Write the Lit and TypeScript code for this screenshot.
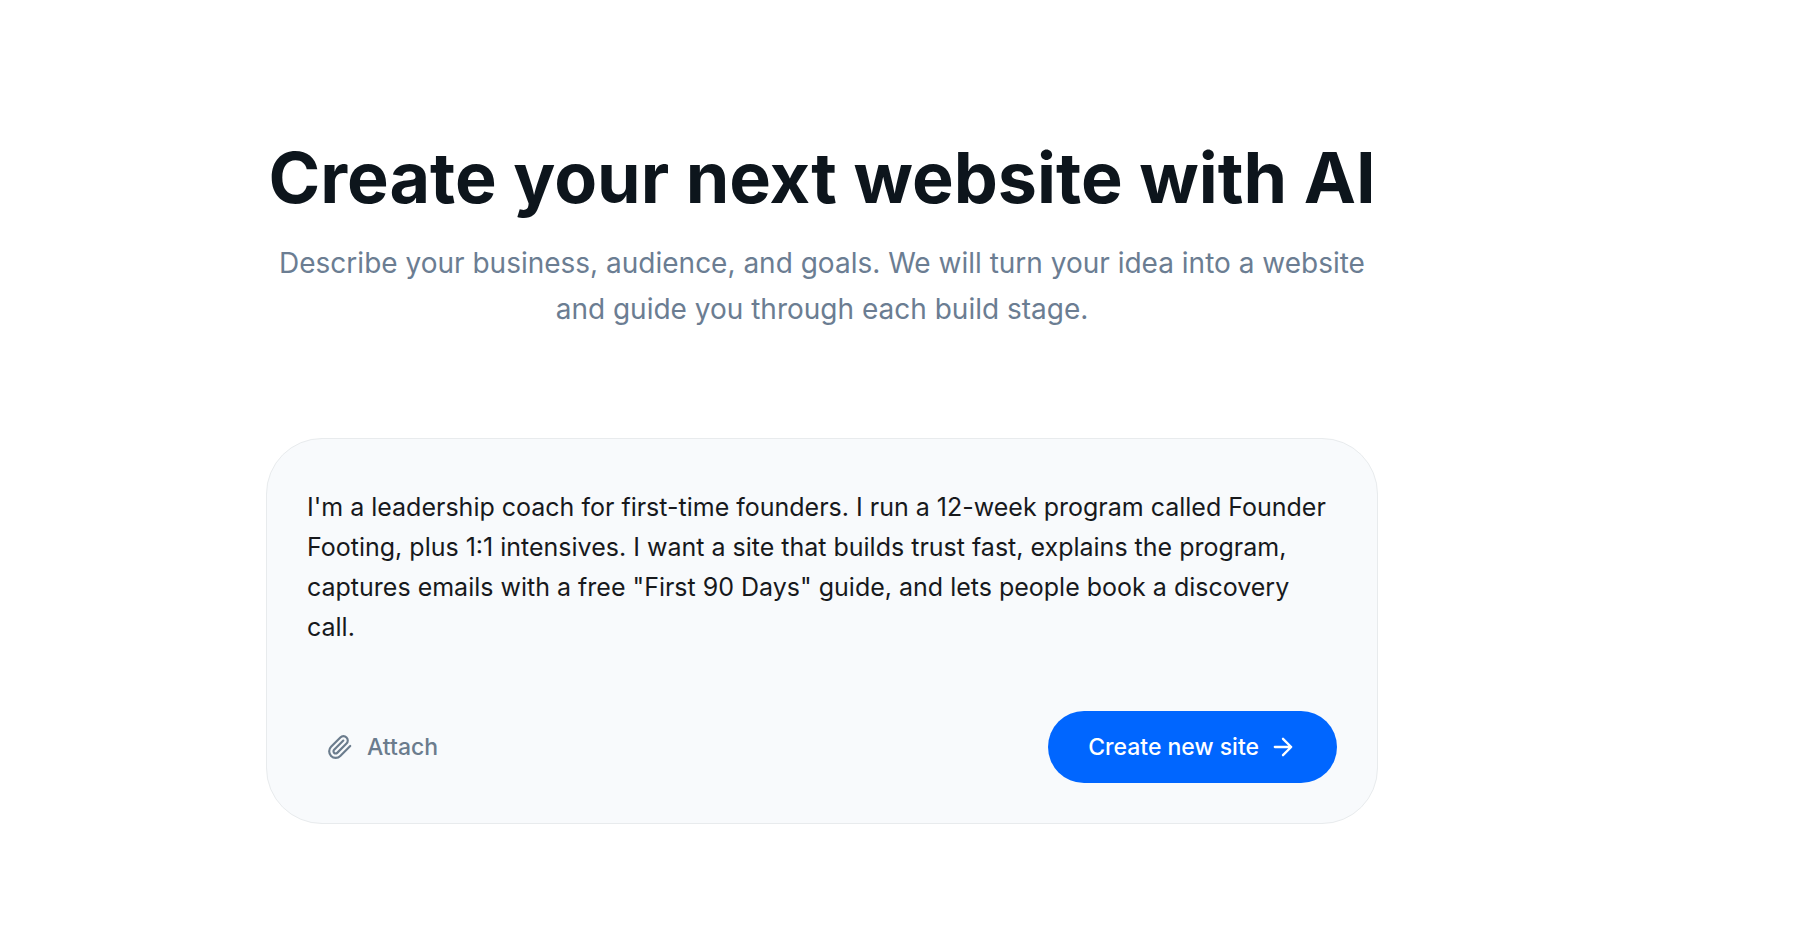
import { LitElement, html, css } from "lit";
import { customElement, state } from "lit/decorators.js";

const INITIAL_PROMPT =
  "I'm a leadership coach for first-time founders. I run a 12-week program called Founder Footing, plus 1:1 intensives. I want a site that builds trust fast, explains the program, captures emails with a free \"First 90 Days\" guide, and lets people book a discovery call.";

@customElement("prompt-card")
export class PromptCard extends LitElement {
  @state() private prompt = INITIAL_PROMPT;

  static styles = css`
    :host {
      display: block;
    }
    .card {
      box-sizing: border-box;
      display: flex;
      flex-direction: column;
      gap: 56px;
      padding: 40px;
      border: 1px solid #e8ebed;
      border-radius: 56px;
      background: #f8fafc;
    }
    .prompt {
      box-sizing: border-box;
      display: block;
      width: 100%;
      margin: 0;
      padding: 8px 0;
      border: 0;
      outline: 0;
      resize: none;
      overflow: hidden;
      background: transparent;
      color: #17191c;
      font: 400 25px/40px Inter, "Liberation Sans", sans-serif;
    }
    .actions {
      display: flex;
      flex-wrap: wrap;
      align-items: center;
      justify-content: space-between;
      gap: 16px;
    }
    button {
      display: inline-flex;
      align-items: center;
      border: 0;
      margin: 0;
      cursor: pointer;
      font: 500 23px/32px Inter, "Liberation Sans", sans-serif;
    }
    .attach {
      gap: 14px;
      padding: 20px;
      background: transparent;
      color: #6b7c8d;
    }
    .create {
      gap: 10px;
      padding: 20px 40px;
      border-radius: 36px;
      background: #0066ff;
      color: #ffffff;
    }
    .icon {
      flex: none;
      fill: none;
      stroke: currentColor;
      stroke-width: 2;
      stroke-linecap: round;
      stroke-linejoin: round;
    }
  `;

  render() {
    return html`
      <form class="card" @submit=${(e: Event) => e.preventDefault()}>
        <textarea
          class="prompt"
          rows="4"
          spellcheck="false"
          aria-label="Website description"
          .value=${this.prompt}
          @input=${(e: Event) => (this.prompt = (e.target as HTMLTextAreaElement).value)}
        ></textarea>
        <div class="actions">
          <button class="attach" type="button">
            <svg class="icon" width="26" height="26" viewBox="0 0 24 24" aria-hidden="true">
              <path d="m21.44 11.05-9.19 9.19a6 6 0 0 1-8.49-8.49l8.57-8.57A4 4 0 1 1 18 8.84l-8.59 8.57a2 2 0 0 1-2.83-2.83l8.49-8.48" />
            </svg>
            <span>Attach</span>
          </button>
          <button class="create" type="submit">
            <span>Create new site</span>
            <svg class="icon" width="28" height="28" viewBox="0 0 24 24" aria-hidden="true">
              <path d="M5 12h14M12 5l7 7-7 7" />
            </svg>
          </button>
        </div>
      </form>
    `;
  }
}

@customElement("app-root")
export class AppRoot extends LitElement {
  static styles = css`
    :host {
      display: block;
      min-height: 100vh;
      background: #ffffff;
      font-family: Inter, "Liberation Sans", sans-serif;
    }
    .page {
      box-sizing: border-box;
      max-width: 1400px;
      padding: 128px 22px 80px 266px;
    }
    .hero {
      display: flex;
      flex-direction: column;
      gap: 12px;
      margin-bottom: 106px;
      text-align: center;
    }
    .title {
      margin: 0;
      color: #0d151c;
      font-size: 70px;
      line-height: 100px;
      font-weight: 700;
    }
    .subtitle {
      margin: 0;
      color: #6b7d92;
      font-size: 28px;
      line-height: 46px;
    }
  `;

  render() {
    return html`
      <main class="page">
        <header class="hero">
          <h1 class="title">Create your next website with AI</h1>
          <p class="subtitle">
            Describe your business, audience, and goals. We will turn your idea into a website and
            guide you through each build stage.
          </p>
        </header>
        <prompt-card></prompt-card>
      </main>
    `;
  }
}
